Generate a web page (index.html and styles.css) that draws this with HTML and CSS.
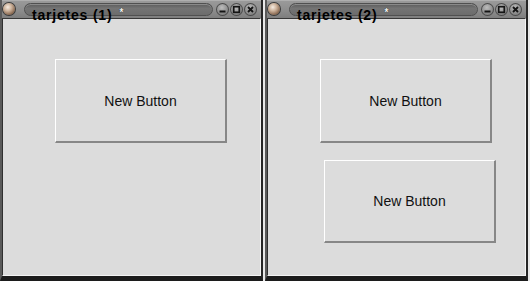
FILE: index.html
```html
<!DOCTYPE html>
<html>
<head>
<meta charset="utf-8">
<link rel="stylesheet" href="styles.css">
</head>
<body>
<div class="desk">
  <div class="window">
    <div class="titlebar">
      <span class="orb"></span>
      <div class="pill"><span class="title">tarjetes (1)<span class="star">*</span></span></div>
      <div class="controls">
        <span class="ctl"><svg viewBox="0 0 13 13"><rect x="3.5" y="7.5" width="6" height="2" fill="#151515"/></svg></span>
        <span class="ctl"><svg viewBox="0 0 13 13"><rect x="3.7" y="3.7" width="5.6" height="5.6" fill="none" stroke="#151515" stroke-width="1.7"/></svg></span>
        <span class="ctl"><svg viewBox="0 0 13 13"><path d="M4 4 L9 9 M9 4 L4 9" stroke="#151515" stroke-width="1.9"/></svg></span>
      </div>
    </div>
    <div class="content">
      <div class="btn btn-a">New Button</div>
    </div>
  </div>
  <div class="window">
    <div class="titlebar">
      <span class="orb"></span>
      <div class="pill"><span class="title">tarjetes (2)<span class="star">*</span></span></div>
      <div class="controls">
        <span class="ctl"><svg viewBox="0 0 13 13"><rect x="3.5" y="7.5" width="6" height="2" fill="#151515"/></svg></span>
        <span class="ctl"><svg viewBox="0 0 13 13"><rect x="3.7" y="3.7" width="5.6" height="5.6" fill="none" stroke="#151515" stroke-width="1.7"/></svg></span>
        <span class="ctl"><svg viewBox="0 0 13 13"><path d="M4 4 L9 9 M9 4 L4 9" stroke="#151515" stroke-width="1.9"/></svg></span>
      </div>
    </div>
    <div class="content">
      <div class="btn btn-a">New Button</div>
      <div class="btn btn-b">New Button</div>
    </div>
  </div>
</div>
</body>
</html>
```

FILE: styles.css
```css
html, body {
  margin: 0;
  padding: 0;
}
body {
  width: 530px;
  height: 281px;
  background: #e8e8e8;
  overflow: hidden;
}
.desk {
  display: flex;
  gap: 2px;
  width: 530px;
  height: 281px;
}
.window {
  width: 263px;
  height: 281px;
  box-sizing: border-box;
  display: flex;
  flex-direction: column;
  background: #2a2a2a;
  border-left: 2px solid #5a5a5a;
  border-right: 2px solid #262626;
  border-bottom: 5px solid #1c1c1c;
}
.titlebar {
  height: 18px;
  flex: none;
  display: flex;
  align-items: flex-start;
  background: linear-gradient(#c4c4c4 0, #9a9a9a 1px, #8c8c8c 60%, #7e7e7e 100%);
  position: relative;
  z-index: 1;
}
.orb {
  width: 12px;
  height: 12px;
  margin: 3px 0 0 1px;
  border-radius: 50%;
  background: radial-gradient(circle at 40% 35%, #f6ece2 0, #cdb39c 35%, #8a6a52 70%, #4a382c 100%);
  box-shadow: 0 0 0 1px #3a3a3a;
  flex: none;
}
.pill {
  margin: 3px 0 0 9px;
  width: 189px;
  height: 13px;
  box-sizing: border-box;
  border-radius: 7px;
  background: linear-gradient(#5c5c5c, #747474 40%, #6c6c6c);
  border: 1px solid #505050;
  box-shadow: inset 0 1px 0 #8a8a8a;
  padding: 2px 0 0 7px;
  flex: none;
  overflow: visible;
}
.title {
  font-family: "Liberation Sans", Arial, sans-serif;
  font-weight: bold;
  font-size: 14px;
  line-height: 13px;
  color: #000;
  white-space: nowrap;
  letter-spacing: 0.8px;
}
.star {
  font-size: 10px;
  font-weight: bold;
  vertical-align: 4px;
  margin-left: 7px;
  color: #f4f4f4;
  text-shadow: 0 0 1px #000;
}
.controls {
  display: flex;
  gap: 1px;
  margin: 3px 0 0 3px;
}
.ctl {
  width: 13px;
  height: 13px;
  border-radius: 50%;
  background: radial-gradient(circle at 45% 35%, #bdbdbd 0, #8e8e8e 50%, #5e5e5e 100%);
  box-shadow: inset 0 0 0 1px #4a4a4a;
  display: block;
}
.ctl svg {
  width: 13px;
  height: 13px;
  display: block;
}
.content {
  flex: 1;
  background: #dcdcdc;
  border-top: 1px solid #383838;
  border-left: 1px solid #303030;
  border-right: 1px solid #f4f4f4;
  border-bottom: 1px solid #f4f4f4;
  display: flex;
  flex-direction: column;
  align-items: flex-start;
  padding: 40px 0 0 52px;
}
.btn {
  box-sizing: border-box;
  width: 172px;
  border-top: 1px solid #ffffff;
  border-left: 1px solid #ffffff;
  border-right: 2px solid #878787;
  border-bottom: 2px solid #878787;
  display: flex;
  align-items: center;
  justify-content: center;
  font-family: "Liberation Sans", Arial, sans-serif;
  font-size: 14px;
  color: #111;
}
.btn-a {
  height: 84px;
}
.btn-b {
  height: 83px;
  margin: 17px 0 0 4px;
}
```
